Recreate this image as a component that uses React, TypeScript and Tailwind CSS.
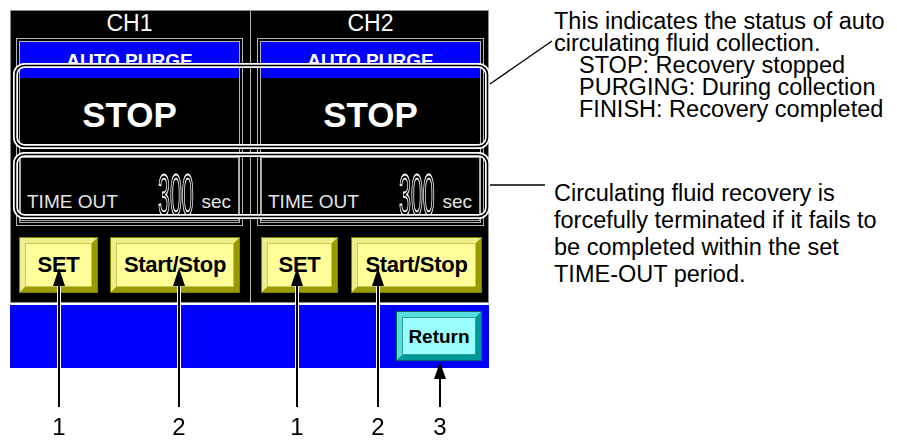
import React from 'react';

type ChannelProps = {
  name: string;
  right?: boolean;
};

function YellowButton({ label, className }: { label: string; className: string }) {
  return (
    <div className={`h-[56px] bg-[#808000] p-px ${className}`}>
      <div className="h-full border-[5px] border-t-[#eeee88] border-l-[#eeee88] border-r-[#999900] border-b-[#999900] bg-[#ffff99]">
        <div className="h-full flex items-center justify-center border border-[#c8c850] text-[22px] font-bold leading-none tracking-[-0.3px] text-black">
          {label}
        </div>
      </div>
    </div>
  );
}

function Channel({ name, right }: ChannelProps) {
  return (
    <div className={right ? 'w-[237px] pl-[6px]' : 'w-[239px] pl-[5px]'}>
      <div className="h-[27px] w-[227px] text-center text-[23px] leading-[25px] text-white">{name}</div>

      <div className="w-[227px] h-[188px] border border-[#b4b4b4] p-[2px]">
        <div className="h-full flex flex-col border border-[#b4b4b4]">
          <div className="h-[36px] flex items-center justify-center bg-[#0000ff] text-[19px] font-bold leading-none text-white">
            AUTO PURGE
          </div>
          <div className="h-[75px] flex items-center justify-center pb-[3px] text-[35px] font-bold leading-none text-white">
            STOP
          </div>
          <div className="flex-1 pt-[4px] pb-[1px]">
            <div className="h-[64px] flex items-end border border-[#a8a8a8] pl-[6px] pr-[7px] pb-[9px] text-[#e4e4e4]">
              <span className="text-[19px] leading-[19px]">TIME OUT</span>
              <div className="ml-auto w-[36px] -mb-[7px] opacity-[0.99] [will-change:transform]">
                <svg className="block overflow-visible" width="36" height="46" viewBox="0 0 36 46">
                  <text
                    x="0"
                    y="43"
                    transform="scale(0.37 1)"
                    fontSize="58"
                    fontFamily="'Liberation Sans', Arial, sans-serif"
                    fill="#000"
                    stroke="#fff"
                    strokeWidth="1.8"
                    vectorEffect="non-scaling-stroke"
                    textRendering="geometricPrecision"
                  >
                    300
                  </text>
                </svg>
              </div>
              <span className="ml-[7px] text-[19px] leading-[19px]">sec</span>
            </div>
          </div>
        </div>
      </div>

      <div className="mt-[11px] flex">
        {right ? (
          <>
            <YellowButton label="SET" className="ml-[4px] w-[77px]" />
            <YellowButton label="Start/Stop" className="ml-[13px] w-[131px]" />
          </>
        ) : (
          <>
            <YellowButton label="SET" className="ml-[3px] w-[79px]" />
            <YellowButton label="Start/Stop" className="ml-[12px] w-[130px]" />
          </>
        )}
      </div>
    </div>
  );
}

function ReturnButton() {
  return (
    <div className="w-[86px] h-[50px] bg-[#006666] p-px">
      <div className="h-full border-[5px] border-t-[#55dddd] border-l-[#55dddd] border-r-[#009999] border-b-[#009999] bg-[#99ffff]">
        <div className="h-full flex items-center justify-center border border-[#339999] text-[19px] font-bold leading-none text-black">
          Return
        </div>
      </div>
    </div>
  );
}

const callouts = [
  { x: 59, n: '1' },
  { x: 179, n: '2' },
  { x: 297, n: '1' },
  { x: 378, n: '2' },
];

function Overlay() {
  return (
    <>
      <svg className="absolute left-0 top-0 pointer-events-none" width="897" height="441" viewBox="0 0 897 441">
        {/* status and time-out brackets */}
        <rect x="15.5" y="65.5" width="472" height="81" rx="9" fill="none" stroke="#ffffff" strokeWidth="5" />
        <rect x="15.5" y="65.5" width="472" height="81" rx="9" fill="none" stroke="#000000" strokeWidth="1.6" />
        <rect x="15.5" y="154.5" width="472" height="62" rx="9" fill="none" stroke="#ffffff" strokeWidth="5" />
        <rect x="15.5" y="154.5" width="472" height="62" rx="9" fill="none" stroke="#000000" strokeWidth="1.6" />

        <line x1="490" y1="84" x2="552" y2="41" stroke="#000" strokeWidth="1.4" />
        <line x1="490" y1="185" x2="545" y2="185" stroke="#000" strokeWidth="1.5" />

        {callouts.map((c) => (
          <g key={c.x}>
            <line x1={c.x} y1={284} x2={c.x} y2={368} stroke="#fff" strokeWidth="4" />
            <line x1={c.x} y1={280} x2={c.x} y2={407} stroke="#000" strokeWidth="2" />
            <polygon points={`${c.x},268 ${c.x - 6},286 ${c.x + 6},286`} fill="#000" />
          </g>
        ))}

        <line x1="440" y1="374" x2="440" y2="407" stroke="#000" strokeWidth="2" />
        <polygon points="440,362 434,379 446,379" fill="#000" />
      </svg>

      {[...callouts, { x: 440, n: '3' }].map((c) => (
        <div
          key={`n${c.x}`}
          className="absolute top-[415px] w-[24px] text-center text-[24px] leading-[24px]"
          style={{ left: c.x - 12 }}
        >
          {c.n}
        </div>
      ))}
    </>
  );
}

export default function App() {
  return (
    <div className="relative w-[897px] h-[441px] overflow-hidden bg-white font-['Liberation_Sans',Arial,sans-serif] text-black">
      <div className="flex pl-[10px] pt-[10px]">
        <div className="w-[479px] flex flex-col">
          <div className="h-[293px] flex border border-[#8c8c8c] bg-black">
            <Channel name="CH1" />
            <div className="w-px bg-[#b4b4b4]" />
            <Channel name="CH2" right />
          </div>
          <div className="mt-[2px] h-[63px] flex justify-end bg-[#0000ff] pt-[6px] pr-[7px]">
            <ReturnButton />
          </div>
        </div>

        <div className="ml-[65px] whitespace-nowrap text-[23.5px]">
          <div className="leading-[22px]">
            <p>This indicates the status of auto</p>
            <p>circulating fluid collection.</p>
            <p className="pl-[25px]">STOP: Recovery stopped</p>
            <p className="pl-[25px]">PURGING: During collection</p>
            <p className="pl-[25px]">FINISH: Recovery completed</p>
          </div>

          <div className="mt-[60px] leading-[27px]">
            <p>Circulating fluid recovery is</p>
            <p>forcefully terminated if it fails to</p>
            <p>be completed within the set</p>
            <p>TIME-OUT period.</p>
          </div>
        </div>
      </div>

      <Overlay />
    </div>
  );
}
